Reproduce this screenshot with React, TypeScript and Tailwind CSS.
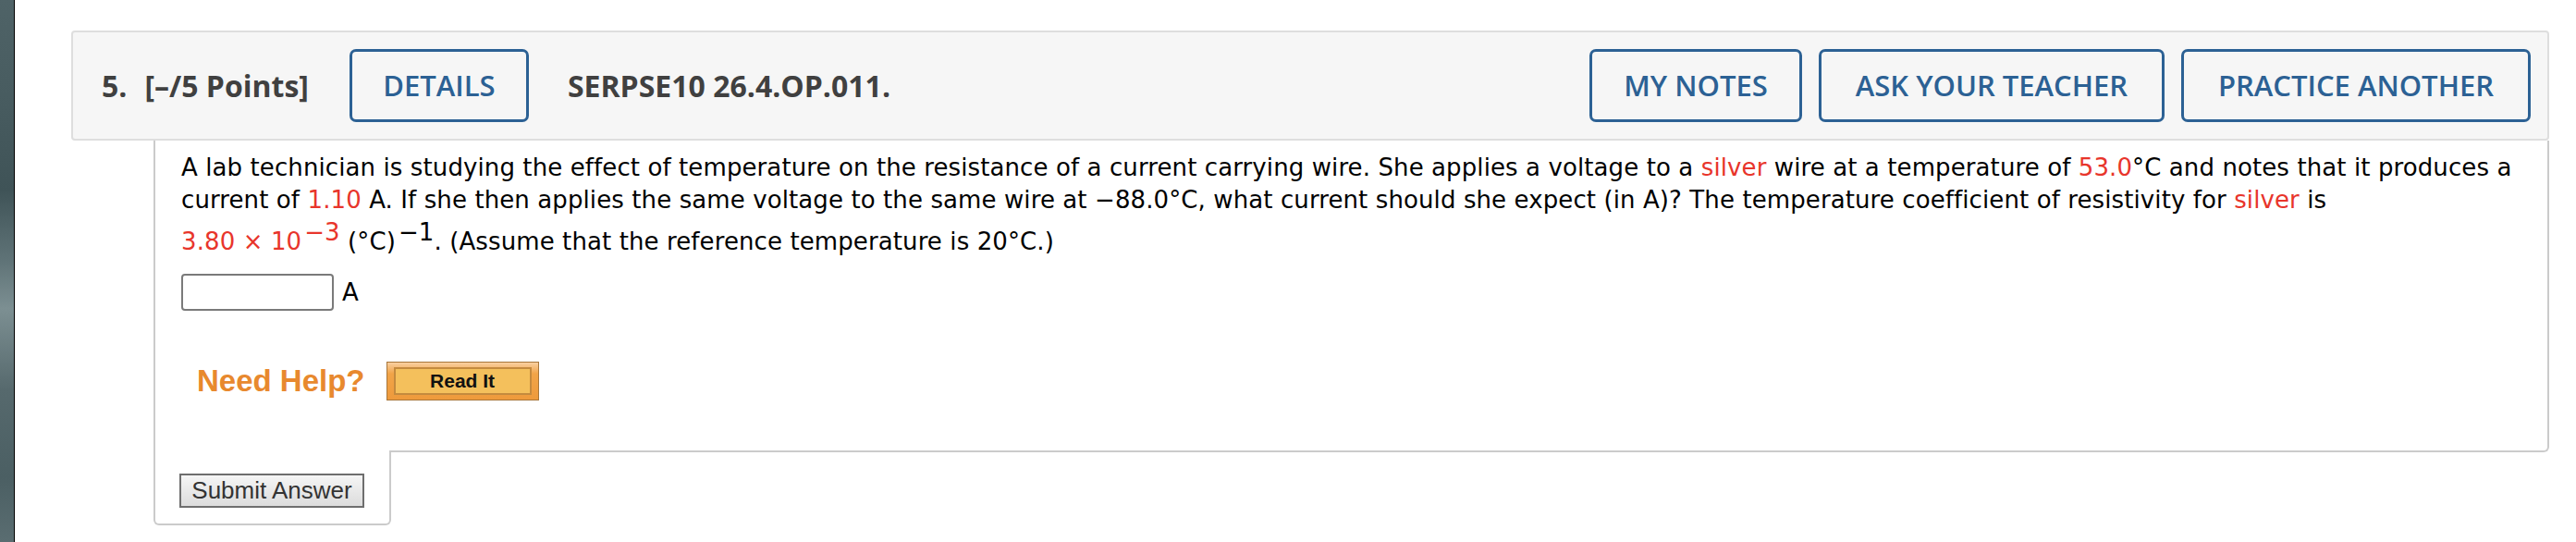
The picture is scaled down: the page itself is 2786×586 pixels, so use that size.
import React from "react";

const headBtn =
  "flex h-[79px] shrink-0 items-center justify-center rounded-[7px] border-[3px] border-[#2c6194] font-['Open_Sans',sans-serif] text-[31px] font-semibold text-[#2c6194]";

export default function App() {
  return (
    <div className="flex min-h-[586px] w-[2786px] bg-white">
      <div className="w-[16px] shrink-0 border-r border-black bg-[linear-gradient(180deg,#4f6367_0%,#475b5f_20%,#3f5357_35%,#5f7377_48%,#7c8f92_57%,#56696d_72%,#4b5f63_88%,#5a6d71_100%)]" />
      <div className="flex-1 pl-[61px] pr-[29px] pt-[33px]">
        <div className="flex h-[119px] items-center rounded-[4px] border-2 border-[#dedede] bg-[#f6f6f6] pl-[31px] pr-[18px] font-['Open_Sans',sans-serif] text-[#404040]">
          <span className="text-[32px] font-bold">5.</span>
          <span className="ml-[19px] text-[32px] font-bold">[–/5 Points]</span>
          <div className={`${headBtn} ml-[44px] w-[194px]`}>DETAILS</div>
          <span className="ml-[42px] text-[32px] font-bold">SERPSE10 26.4.OP.011.</span>
          <div className="flex-1" />
          <div className={`${headBtn} w-[230px]`}>MY NOTES</div>
          <div className={`${headBtn} ml-[18px] w-[374px]`}>ASK YOUR TEACHER</div>
          <div className={`${headBtn} ml-[18px] w-[378px]`}>PRACTICE ANOTHER</div>
        </div>
        <div className="ml-[89px]">
          <div className="rounded-br-[6px] border-x-2 border-b-2 border-[#cbcbcb] pb-[50px] pl-[28px] pr-[28px] pt-[12px]">
            <p className="font-['Verdana','DejaVu_Sans',sans-serif] text-[26px] leading-[35px] tracking-[0.1px] text-black">
              A lab technician is studying the effect of temperature on the resistance of a current carrying wire. She
              applies a voltage to a <span className="text-[#e8352b]">silver</span> wire at a temperature of{" "}
              <span className="text-[#e8352b]">53.0</span>°C and notes that it produces a current of{" "}
              <span className="text-[#e8352b]">1.10</span> A. If she then applies the same voltage to the same wire at
              −88.0°C, what current should she expect (in A)? The temperature coefficient of resistivity for{" "}
              <span className="text-[#e8352b]">silver</span> is{" "}
              <span className="whitespace-nowrap">
                <span className="text-[#e8352b]">
                  3.80 × 10<span className="ml-[3px] align-[10px]">−3</span>
                </span>{" "}
                (°C)<span className="ml-[3px] align-[10px]">−1</span>.
              </span>{" "}
              (Assume that the reference temperature is 20°C.)
            </p>
            <div className="mt-[17px] flex items-center">
              <div className="h-[40px] w-[165px] rounded-[4px] border-2 border-[#7a7a7a] bg-white" />
              <span className="ml-[9px] font-['Verdana','DejaVu_Sans',sans-serif] text-[26px] text-black">A</span>
            </div>
            <div className="mt-[51px] flex items-center pl-[17px]">
              <span className="font-['Liberation_Sans',Arial,sans-serif] text-[33px] font-bold text-[#e8892e]">
                Need Help?
              </span>
              <div className="ml-[23px] flex h-[42px] w-[165px] items-center justify-center border border-[#a8763a] bg-[linear-gradient(180deg,#f9cfa0_0%,#f1a448_30%,#ee9a3c_100%)] px-[7px] py-[5px]">
                <div className="flex h-full w-full items-center justify-center border-2 border-[#c48a3e] bg-[#f4c05c] font-['Liberation_Sans',Arial,sans-serif] text-[21px] font-bold text-[#111]">
                  Read It
                </div>
              </div>
            </div>
          </div>
          <div className="-mt-[2px] w-[257px] rounded-b-[6px] border-x-2 border-b-2 border-[#cbcbcb] bg-white pb-[17px] pl-[26px] pt-[25px]">
            <div className="flex h-[37px] w-[200px] items-center justify-center border-2 border-[#6e6e6e] bg-[linear-gradient(180deg,#f5f5f5_0%,#e6e6e6_60%,#dcdcdc_100%)] font-['Liberation_Sans',Arial,sans-serif] text-[26px] text-[#333]">
              Submit Answer
            </div>
          </div>
        </div>
      </div>
    </div>
  );
}
